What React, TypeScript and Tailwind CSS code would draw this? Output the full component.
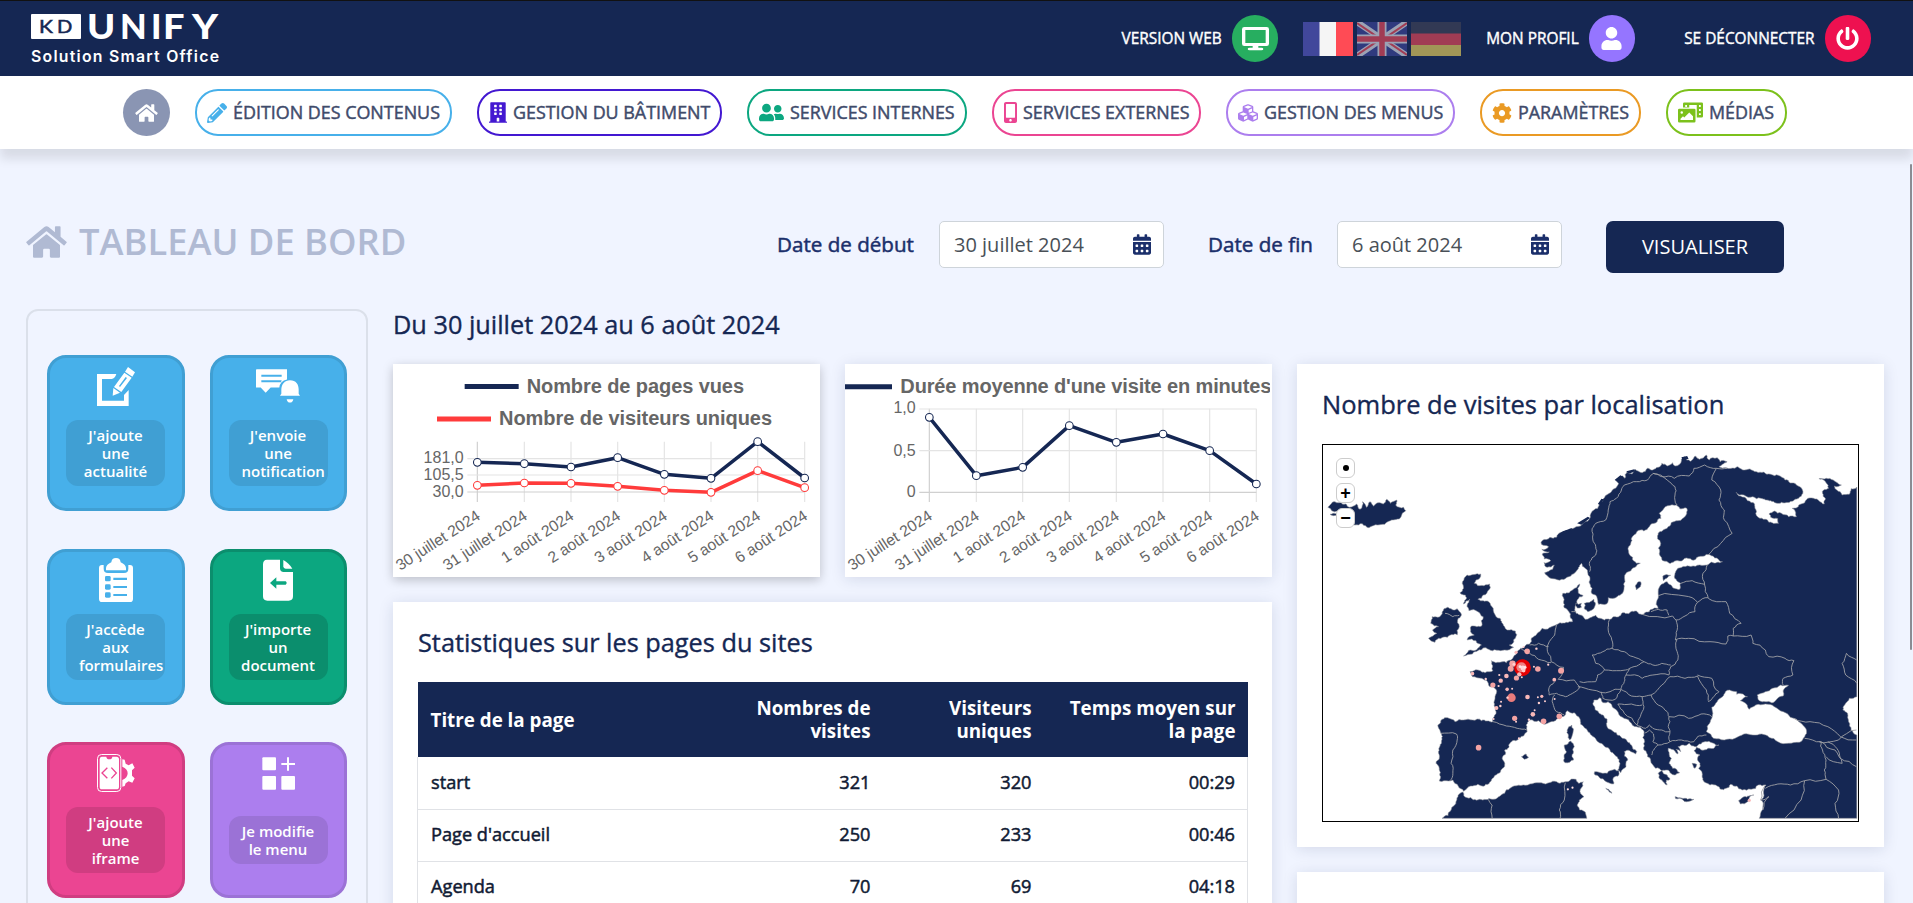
import React from "react";
import {
  FaBuilding,
  FaCalendarAlt,
  FaCog,
  FaCubes,
  FaHome,
  FaMobileAlt,
  FaPencilAlt,
  FaPhotoVideo,
  FaPowerOff,
  FaUser,
  FaUserFriends,
} from "react-icons/fa";

type Pt = [number, number];

const parse = (s: string): Pt[] =>
  s.trim().split(/\s+/).map((p) => p.split(",").map(Number) as Pt);

const noise = (n: number) => {
  const v = Math.sin(n * 127.1 + 11.7) * 43758.5453;
  return (v - Math.floor(v)) * 2 - 1;
};

// Midpoint displacement that turns a coarse outline into an irregular coast.
function rough(pts: Pt[], closed: boolean, amp: number, levels: number): string {
  let cur = pts;
  for (let l = 0; l < levels; l++) {
    const next: Pt[] = [];
    const count = closed ? cur.length : cur.length - 1;
    for (let i = 0; i < count; i++) {
      const a = cur[i];
      const b = cur[(i + 1) % cur.length];
      next.push(a);
      const dx = b[0] - a[0];
      const dy = b[1] - a[1];
      const len = Math.hypot(dx, dy);
      if (len > 7 && len < 150) {
        const k = amp * noise(a[0] * 3.1 + a[1] * 7.7 + l);
        next.push([(a[0] + b[0]) / 2 - dy * k, (a[1] + b[1]) / 2 + dx * k]);
      }
    }
    if (!closed) next.push(cur[cur.length - 1]);
    cur = next;
  }
  return "M" + cur.map((p) => p[0].toFixed(1) + "," + p[1].toFixed(1)).join("L") + (closed ? "Z" : "");
}

const MAINLAND = `760,400 752,412 742,428 725,440 705,448 680,446 663,436 657,428 668,424 684,405 664,412 655,398 674,392 656,387 650,372 670,366 649,358 668,350 648,343 650,332 672,322 690,322 700,308 722,302 745,290 765,280 785,262 795,240 810,225 820,208 838,190 855,175 864,160 855,150 875,138 882,145 888,125 902,132 910,118 930,128 945,115 960,120 975,112 985,100 1000,108 1015,98 1022,108 1040,92 1048,80 1065,94 1078,78 1090,88 1110,75 1118,90 1140,83 1148,95 1168,95 1155,103 1145,110 1165,113 1190,115 1198,110 1212,120 1250,125 1290,133 1330,150 1362,165 1378,178 1380,190 1368,205 1350,214 1320,217 1290,212 1262,205 1240,200 1215,195 1193,187 1205,198 1225,212 1245,222 1248,238 1255,262 1275,268 1285,277 1312,280 1310,266 1290,262 1285,252 1300,243 1320,250 1340,260 1362,260 1360,248 1350,235 1375,222 1410,205 1425,212 1440,222 1443,205 1435,190 1438,180 1452,175 1445,158 1425,146 1465,150 1488,165 1468,168 1475,180 1490,195 1510,193 1515,176 1531,171 1531,800 1510,805 1497,825 1492,840 1505,850 1508,875 1515,900 1531,915 1531,1165 1258,1165 1268,1130 1262,1110 1270,1090 1277,1065 1255,1065 1235,1078 1210,1080 1195,1068 1178,1063 1165,1075 1150,1078 1140,1068 1120,1065 1108,1058 1100,1045 1098,1030 1088,1015 1092,1000 1085,990 1092,975 1075,962 1082,952 1120,955 1145,945 1130,940 1112,935 1095,942 1078,950 1062,940 1045,945 1030,950 1038,965 1025,958 1030,972 1012,958 1003,955 1003,962 1012,985 1005,1000 1015,1015 1035,1028 1020,1035 1010,1030 1000,1020 985,1022 1000,1035 1008,1048 998,1050 1000,1065 985,1050 975,1030 985,1022 968,1015 955,998 945,980 935,960 937,935 935,910 915,890 895,875 875,862 860,842 845,825 835,815 822,818 812,803 795,810 792,820 798,838 820,855 830,880 850,905 875,925 900,945 915,965 912,972 895,962 880,965 890,990 885,1010 870,1028 862,1020 868,1000 860,980 840,960 815,940 790,918 770,895 755,865 740,848 720,842 705,860 690,868 665,880 640,872 615,870 605,885 608,905 585,925 560,940 545,960 538,985 545,1005 528,1030 508,1050 500,1062 470,1063 450,1068 430,1084 415,1068 400,1050 375,1052 362,1053 362,1020 353,1000 360,970 368,935 365,905 358,885 370,868 385,863 430,870 480,872 512,875 520,835 518,800 522,780 500,765 497,755 480,745 455,740 448,725 470,720 495,725 512,722 508,692 525,697 550,698 570,680 578,665 590,655 615,642 635,612 650,595 688,585 700,578 735,575 725,545 710,515 708,490 735,480 755,462 752,490 765,497 748,510 742,530 745,550 770,568 800,555 825,570 850,560 880,548 910,543 935,552 950,545 975,535 972,510 975,485 985,462 1000,455 1020,475 1035,478 1038,460 1025,448 1022,430 1030,415 1060,408 1110,405 1140,397 1155,395 1128,378 1120,374 1080,388 1040,393 1010,400 985,388 978,370 982,340 975,310 1000,295 1030,272 1055,250 1055,235 1020,226 995,230 978,250 983,265 950,290 915,305 900,325 892,350 895,375 925,400 910,412 885,430 882,455 875,490 860,500 835,503 830,522 808,523 803,500 785,465 778,430`;

const ISLANDS = [
  "440,435 478,432 475,445 460,460 503,462 500,480 485,495 470,508 500,515 513,535 515,548 532,565 545,590 552,600 575,603 575,625 558,645 570,652 545,660 500,658 470,662 455,672 430,678 450,660 480,645 465,632 440,630 460,615 450,600 452,588 482,585 485,560 470,545 445,542 440,525 447,508 430,522 435,495 420,488 430,475 427,455",
  "370,546 385,532 412,536 424,553 415,565 418,590 412,615 385,622 350,637 332,625 355,610 343,600 360,590 338,580 342,560 358,562",
  "50,232 70,215 100,222 110,232 122,228 130,222 140,238 147,215 158,232 168,215 178,228 195,218 205,222 215,208 225,220 243,210 240,225 262,232 268,242 255,260 225,272 190,285 165,293 125,285 90,262 56,253 95,248 105,240",
  "712,945 730,933 740,950 738,990 715,998 718,965",
  "733,885 736,910 727,930 720,900",
  "797,1025 820,1030 865,1022 848,1048 850,1062 825,1052 798,1035",
  "828,1075 836,1078 845,1090 838,1086",
  "1022,1100 1040,1104 1075,1108 1065,1113 1024,1106",
  "1200,1112 1215,1100 1243,1095 1225,1115 1205,1122",
  "592,980 605,972 612,982 600,988",
  "912,465 925,455 925,470 914,480",
  "988,438 1010,436 1000,444 990,452",
  "768,520 795,508 797,530 778,545 768,535",
  "744,520 760,520 760,532 748,534",
  "1070,1000 1083,1003 1078,1015",
  "370,1165 395,1140 410,1112 428,1086 440,1103 475,1108 510,1108 545,1090 560,1075 610,1065 660,1062 700,1060 720,1055 745,1048 752,1060 765,1055 757,1078 767,1100 748,1125 755,1140 772,1152 775,1165",
];

const SEAS = [
  "1110,905 1112,890 1122,870 1128,850 1125,832 1140,815 1155,800 1163,785 1175,780 1195,785 1195,793 1212,792 1225,800 1205,812 1222,822 1230,838 1248,825 1275,822 1300,830 1325,845 1345,862 1375,880 1390,900 1385,920 1370,937 1340,940 1310,935 1285,922 1265,912 1240,915 1215,912 1190,925 1160,930 1130,925",
  "1252,795 1275,785 1295,775 1318,765 1340,766 1325,782 1325,798 1305,810 1292,818 1275,815 1258,812",
];

const BORDERS = [
  "783,425 785,415 783,395 800,375 800,350 792,330 790,295 800,280 828,270 835,240 840,215 858,205 872,180 880,165 915,155 945,150 960,132",
  "960,130 985,140 1020,145 1062,138 1075,115 1105,105 1138,115 1168,115",
  "960,130 1000,150 1022,170 1022,195 1028,225",
  "1138,115 1125,150 1150,180 1145,210 1160,240 1160,270 1182,310 1150,340 1115,375",
  "1112,405 1100,430 1105,465 1115,503 1085,517 1050,498 975,497",
  "1038,460 1070,452 1105,463",
  "1085,517 1078,545 1050,558 1025,570 1015,558 930,553",
  "955,545 975,538 1000,540 1005,556",
  "1115,505 1165,515 1175,550 1207,580 1185,595 1185,618 1235,615 1240,640 1275,660 1285,680 1330,685 1355,692 1352,735 1325,745 1325,765",
  "1025,570 1028,600 1023,630 1060,625 1120,635 1165,642 1170,618 1185,618",
  "1027,630 1028,665 1030,690 1010,710 1005,735",
  "838,570 835,600 845,630 845,655 820,665 790,675 800,700 825,720 870,722 895,715 920,705 935,695 905,680 880,665 845,655",
  "935,695 960,705 985,700 1010,705",
  "895,715 885,735 930,745 960,735 1005,735",
  "755,755 800,755 805,735 825,720",
  "750,770 790,780 840,785 870,778 880,755 885,735",
  "870,778 900,798 930,800 955,795 985,765 1008,740 1050,745 1085,738 1110,780 1115,812",
  "1085,735 1125,745 1145,785 1130,800 1115,815",
  "955,795 975,825 1000,845 1005,860 1060,865 1095,852 1125,860",
  "1005,860 1003,890 1008,905 1008,935 1040,930 1075,935 1085,920 1110,915",
  "930,800 935,830 925,860 915,885 940,895 950,885 960,895 985,900 1008,905",
  "862,822 900,822 930,825",
  "862,822 880,850 915,885",
  "815,785 820,805 855,808 870,780",
  "937,910 950,900 962,912 960,935 975,945 1008,935",
  "957,975 965,955 975,945",
  "690,585 685,615 670,635 665,665 675,695 710,712 695,748",
  "615,645 640,640 668,650",
  "590,655 615,670 640,688 675,698",
  "695,748 740,750 755,770 735,790 715,800 690,790 670,795 668,780 685,755",
  "685,795 680,820 690,845 712,855",
  "512,875 550,888 580,895 607,900",
  "366,910 410,912 412,930 400,960 395,1000 400,1030 392,1052",
  "500,1108 510,1125 510,1165",
  "715,1058 712,1110 698,1140 700,1165",
  "1385,925 1430,935 1435,960 1445,990 1440,1020 1445,1048 1385,1052 1345,1065 1310,1062 1275,1075",
  "1355,865 1400,875 1450,890 1485,920 1530,930",
  "1425,935 1480,930 1530,900",
  "1430,935 1470,960 1490,1000 1445,980",
  "1450,935 1475,955 1485,985 1530,1010",
  "1445,1048 1480,1080 1470,1120 1480,1165",
  "1385,1052 1375,1110 1330,1165",
  "1531,760 1500,735 1490,700 1502,670 1531,690",
  "378,550 400,560 418,556",
  "732,545 745,545",
  "1275,1065 1262,1110 1285,1100 1268,1140",
];

const PINS: [number, number, number, string][] = [
  [595, 713, 8.4, "#e60000"], [592, 712, 5, "#f08080"], [596, 714, 2.4, "#ffd9d9"], [588, 710, 1.4, "#ffe6e6"], [602, 712, 1.4, "#ffe6e6"], [598, 722, 1.8, "#ffc9c9"],
  [567, 701, 3.2, "#f4a3a3"], [562, 716, 3, "#f4a3a3"], [571, 703, 1.4, "#ffd0d0"], [578, 744, 2.6, "#f4a3a3"], [586, 733, 2.2, "#f9b9b9"], [593, 742, 1, "#ffd0d0"],
  [608, 664, 2.8, "#f4a3a3"], [577, 667, 1.6, "#f9b9b9"], [634, 656, 1.2, "#ffd0d0"], [598, 651, 1, "#ffd0d0"], [638, 717, 2.8, "#f4a3a3"], [627, 710, 1, "#ffd0d0"],
  [667, 704, 1.1, "#ffd0d0"], [703, 722, 3, "#f4a3a3"], [684, 749, 1.9, "#f9b9b9"], [455, 731, 1.8, "#f9b9b9"], [492, 747, 1.2, "#ffd0d0"], [512, 765, 2.6, "#f4a3a3"],
  [530, 735, 1.1, "#ffd0d0"], [550, 738, 2.3, "#f9b9b9"], [534, 752, 2.2, "#f9b9b9"], [528, 768, 1.1, "#ffd0d0"], [552, 778, 1.8, "#f9b9b9"], [566, 776, 1, "#ffd0d0"],
  [564, 803, 4.3, "#ea7c7c"], [553, 803, 1.2, "#ffd0d0"], [609, 801, 2.3, "#f9b9b9"], [638, 802, 1, "#ffd0d0"], [649, 799, 1.6, "#f9b9b9"], [641, 819, 1.2, "#ffd0d0"], [658, 814, 1, "#ffd0d0"], [685, 807, 1, "#ffd0d0"],
  [522, 834, 2, "#f9b9b9"], [533, 828, 1.2, "#ffd0d0"], [535, 815, 1, "#ffd0d0"], [514, 867, 1.1, "#ffd0d0"], [573, 865, 2.6, "#f4a3a3"], [577, 875, 1, "#ffd0d0"], [624, 853, 2.3, "#f9b9b9"], [629, 841, 1, "#ffd0d0"],
  [613, 869, 1.2, "#ffd0d0"], [654, 874, 2.8, "#f4a3a3"], [698, 859, 2.8, "#f4a3a3"], [585, 925, 1.1, "#ffd0d0"], [472, 953, 2.8, "#f4a3a3"], [722, 1078, 1.1, "#ffe0e0"], [735, 1073, 1.1, "#ffe0e0"], [1230, 1111, 1.6, "#f9b9b9"],
];

function EuropeMap() {
  return (
    <svg className="block h-full w-full" viewBox="36.4 45 1498 1128" preserveAspectRatio="none">
      <g fill="#152753" stroke="#8d9099" strokeWidth="1.6">
        <path d={rough(parse(MAINLAND), true, 0.2, 3)} />
        {ISLANDS.map((s) => <path key={s} d={rough(parse(s), true, 0.2, 3)} />)}
        {SEAS.map((s) => <path key={s} d={rough(parse(s), true, 0.14, 2)} fill="#fff" />)}
      </g>
      <g fill="#152753">
        <path d="M690 318l18-14 26-10-4 8-22 12zM748 280l30-20 6 4-24 20zM853 150l16-14 8 4-12 14zM886 124l22-6 2 6-18 8zM1040 82l16-4 4 8-16 6zM806 222l10-16 6 2-8 18z" />
      </g>
      <g fill="none" stroke="#a0a1a5" strokeWidth="2.6" strokeLinejoin="round">
        {BORDERS.map((s) => <path key={s} d={rough(parse(s), false, 0.13, 2)} />)}
      </g>
      {PINS.map(([x, y, r, c]) => <ellipse key={x + "-" + y} cx={x} cy={y} rx={r * 2.8} ry={r * 3} fill={c} />)}
    </svg>
  );
}

const DAYS = ["30 juillet 2024", "31 juillet 2024", "1 août 2024", "2 août 2024", "3 août 2024", "4 août 2024", "5 août 2024", "6 août 2024"];

function Series({ pts, color }: { pts: Pt[]; color: string }) {
  return (
    <g stroke={color}>
      <polyline points={pts.map((p) => p.join(",")).join(" ")} fill="none" strokeWidth="10.5" strokeLinejoin="round" />
      {pts.map((p) => <circle key={p[0]} cx={p[0]} cy={p[1]} r="11.5" fill="#fff" strokeWidth="3.2" />)}
    </g>
  );
}

function DayLabels({ xs, y }: { xs: number[]; y: number }) {
  return (
    <g fontSize="47" fill="#666" textAnchor="end">
      {xs.map((x, i) => (
        <text key={x} transform={`translate(${x + 3} ${y}) rotate(-33)`} dy="16">{DAYS[i]}</text>
      ))}
    </g>
  );
}

const X1 = [292, 433, 573, 713, 853, 993, 1133, 1274];
const X2 = [298, 439, 578, 718, 859, 999, 1139, 1279];
const zip = (xs: number[], ys: number[]): Pt[] => xs.map((x, i) => [x, ys[i]] as Pt);

function VisitsChart() {
  return (
    <svg className="block h-[213px] w-[427px] overflow-visible font-['Liberation_Sans',sans-serif]" viewBox="39 222 1281 639">
      <g stroke="#e4e4e4" strokeWidth="3.5">
        {X1.map((x, i) => <path key={x} d={`M${x} 455V636`} stroke={i === 0 ? "#cfcfcf" : "#e4e4e4"} />)}
        <path d="M262 506H1274M262 555H1274" />
        <path d="M262 606H1274" stroke="#d0d0d0" />
      </g>
      <path d="M254 289.500H416" stroke="#152753" strokeWidth="15" />
      <path d="M171 387H333" stroke="#ff3b3b" strokeWidth="15" />
      <g fontSize="60" fontWeight="700" fill="#666">
        <text x="440" y="308" textLength="652">Nombre de pages vues</text>
        <text x="357" y="405" textLength="819">Nombre de visiteurs uniques</text>
      </g>
      <g fontSize="48" fill="#666" textAnchor="end">
        <text x="251" y="518">181,0</text>
        <text x="251" y="569">105,5</text>
        <text x="251" y="620">30,0</text>
      </g>
      <Series color="#ff3b3b" pts={zip(X1, [586, 579, 580, 589, 601, 607, 542, 593])} />
      <Series color="#152753" pts={zip(X1, [517, 521, 531, 503, 553, 565, 455, 564])} />
      <DayLabels xs={X1} y={672} />
    </svg>
  );
}

function DurationChart() {
  return (
    <svg className="block h-[213px] w-[425px] font-['Liberation_Sans',sans-serif]" viewBox="45 42 1275 639">
      <g stroke="#e4e4e4" strokeWidth="3.5">
        {X2.map((x, i) => <path key={x} d={`M${x} 176V456`} stroke={i === 0 ? "#cfcfcf" : "#e4e4e4"} />)}
        <path d="M268 177H1279M268 302H1279" />
        <path d="M268 427H1279" stroke="#d0d0d0" />
      </g>
      <path d="M24 110H186" stroke="#152753" strokeWidth="15" />
      <text x="211" y="128" fontSize="60" fontWeight="700" fill="#666" textLength="1113">Durée moyenne d'une visite en minutes</text>
      <g fontSize="48" fill="#666" textAnchor="end">
        <text x="257" y="190">1,0</text>
        <text x="257" y="317">0,5</text>
        <text x="257" y="440">0</text>
      </g>
      <Series color="#152753" pts={zip(X2, [202, 377, 352, 227, 277, 252, 302, 402])} />
      <DayLabels xs={X2} y={492} />
    </svg>
  );
}

function Logo() {
  return (
    <svg className="block h-[58px] w-[200px] overflow-visible" viewBox="0 0 200 58">
      <rect x="5" y="4" width="50" height="25" rx="1" fill="#fff" />
      <g fontFamily="Lato, sans-serif" fill="#152753" stroke="#152753" strokeWidth="0.500" fontSize="17.500" fontWeight="400">
        <text transform="translate(13 22.800) scale(1.200 1)">K</text>
        <text transform="translate(31 22.800) scale(1.150 1)">D</text>
      </g>
      <g fontFamily="Lato, sans-serif" fill="#fff" fontSize="34.500" fontWeight="900">
        <text transform="translate(61 28.700) scale(1.100 1)">U</text>
        <text transform="translate(94 28.700)">N</text>
        <text transform="translate(125 28.700)">I</text>
        <text transform="translate(137 28.700) scale(1.100 1)">F</text>
        <text transform="translate(166 28.700) scale(1.150 1)">Y</text>
      </g>
      <text x="5" y="52" fontFamily="Inter, sans-serif" fontSize="15.800" fontWeight="600" fill="#fff" textLength="188">Solution Smart Office</text>
    </svg>
  );
}

function ScreenIcon() {
  return (
    <svg className="h-[24px] w-[27px]" viewBox="0 0 81 72" fill="#fff">
      <path fillRule="evenodd" d="M7 0H74Q81 0 81 7V50Q81 57 74 57H49V62H58Q64 62 64 66T58 70H23Q17 70 17 66T23 62H32V57H7Q0 57 0 50V7Q0 0 7 0ZM10 9V48H71V9Z" />
    </svg>
  );
}

function FlagFr() {
  return (
    <svg className="h-[34px] w-[50px]" viewBox="0 0 50 34">
      <path fill="#41479b" d="M0 0h17v34H0z" />
      <path fill="#f5f5f5" d="M16.500 0H33v34H16.500z" />
      <path fill="#ff4b55" d="M33 0h17v34H33z" />
    </svg>
  );
}

function FlagUk() {
  return (
    <svg className="h-[34px] w-[50px] opacity-60" viewBox="0 0 50 34">
      <path fill="#41479b" d="M0 0h50v34H0z" />
      <path d="M0 0l50 34M50 0L0 34" stroke="#f5f5f5" strokeWidth="6" />
      <path d="M0 1l20 13.600M50 33L30 19.400M50 1L30 14.600M0 33l20-13.600" stroke="#ff4b55" strokeWidth="2" />
      <path d="M25 0v34M0 17h50" stroke="#f5f5f5" strokeWidth="9" />
      <path d="M25 0v34M0 17h50" stroke="#ff4b55" strokeWidth="5.500" />
    </svg>
  );
}

function FlagDe() {
  return (
    <svg className="h-[34px] w-[50px] opacity-60" viewBox="0 0 50 34">
      <path fill="#464655" d="M0 0h50v12H0z" />
      <path fill="#ff4b55" d="M0 11.500h50v12H0z" />
      <path fill="#ffe15a" d="M0 23h50v11H0z" />
    </svg>
  );
}

function HeaderAction({ label, icon, tone }: { label: string; icon: React.ReactNode; tone: string }) {
  return (
    <div className="flex items-center gap-[10px] text-[15.400px] whitespace-nowrap text-white">
      <span className="[-webkit-text-stroke:0.4px]">{label}</span>
      <span className={`flex size-[46.5px] items-center justify-center rounded-full ${tone}`}>{icon}</span>
    </div>
  );
}

function NavPill({ label, icon, tone }: { label: string; icon: React.ReactNode; tone: string }) {
  return (
    <div className={`flex h-[47px] items-center gap-[6px] rounded-[23px] border-2 pl-[10px] whitespace-nowrap ${tone}`}>
      {icon}
      <span className="text-[#3f4b6b] [-webkit-text-stroke:0.45px]">{label}</span>
    </div>
  );
}

function Tile({ lines, icon, tone, labelTone, short }: { lines: string[]; icon: React.ReactNode; tone: string; labelTone: string; short?: boolean }) {
  return (
    <div className={`flex h-[156px] w-[137.5px] flex-col items-start rounded-[19px] border-[3px] px-4 ${tone}`}>
      <div className={`w-full shrink-0 ${short ? "h-[71px]" : "h-[62px]"}`}>{icon}</div>
      <div className={`w-[99px] rounded-[12px] px-[13px] pt-[6px] pb-[6px] ${labelTone}`}>
        {lines.map((l) => (
          <div key={l} className="flex justify-center">
            <span className={`text-[15px] leading-[18px] font-semibold whitespace-nowrap text-white ${l.length > 10 ? "w-full" : ""}`}>{l}</span>
          </div>
        ))}
      </div>
    </div>
  );
}

function EditIcon() {
  return (
    <svg className="ml-[31px] mt-[9px] h-[39px] w-[38px]" viewBox="0 0 114 117" fill="#fff">
      <path d="M0 21H58Q54 34 44 36H15V101H81V84L95 69V117H0Z" />
      <path d="M93 0L114 16 106 29 84 14Z" />
      <path fillRule="evenodd" d="M82 17L104 32 73 75 51 60ZM86 30L66 57 69 60 90 33Z" />
      <path d="M49 63L69 77 47 86Z" />
    </svg>
  );
}

function NotifyIcon() {
  return (
    <svg className="ml-[27px] mt-[11px] h-[34px] w-[44px]" viewBox="0 0 132 101" fill="#fff">
      <path fillRule="evenodd" d="M2 0H93V31Q72 36 70 55H44L29 71 14 55H0V2ZM16 17V23H77V17ZM16 33V39H75L77 33Z" />
      <path d="M102 33C120 33 128 45 128 61V74L132 80H72L76 74V61C76 45 86 33 102 33Z" />
      <path d="M92 90H112Q110 100 102 100T92 90Z" />
    </svg>
  );
}

function FormIcon() {
  return (
    <svg className="ml-[33px] mt-[6px] h-[44px] w-[34px]" viewBox="0 0 102 132" fill="#fff">
      <path fillRule="evenodd" d="M9 21H14V32Q14 45 27 45H75Q88 45 88 32V21H93Q102 21 102 30V122Q102 132 93 132H9Q0 132 0 122V30Q0 21 9 21Z" />
      <path d="M21 37V30Q22 20 37 13Q38 0 51 0T65 13Q80 20 81 30V37Z" />
      <g fill="#47b0ea">
        <rect x="18" y="54" width="17" height="16" rx="4" />
        <rect x="18" y="79" width="17" height="16" rx="4" />
        <rect x="18" y="103" width="17" height="16" rx="4" />
        <path d="M43 59H84V66H43ZM43 84H84V90H43ZM43 108H84V114H43Z" />
      </g>
    </svg>
  );
}

function ImportIcon() {
  return (
    <svg className="ml-[34px] mt-[7px] h-[42px] w-[30px]" viewBox="0 0 90 126" fill="#fff">
      <path d="M12 2H51V28Q51 39 62 39H90V112Q90 125 77 125H13Q0 125 0 112V16Q0 2 12 2Z" />
      <path d="M61 3Q78 12 88 29H68Q61 29 61 22Z" />
      <path d="M21 72L40 55V67H68Q74 72 68 77H40V89Z" fill="#0ca780" />
    </svg>
  );
}

function IframeIcon() {
  return (
    <svg className="ml-[31px] mt-[9px] h-[38px] w-[38px]" viewBox="0 0 114 114" fill="#fff">
      <rect x="1.500" y="1.500" width="70" height="111" rx="12" fill="none" stroke="#fff" strokeWidth="3" />
      <path d="M14 8H28Q29 16 37 16T46 8H58Q66 8 66 16V98Q66 106 58 106H15Q8 106 8 98V16Q8 8 14 8Z" />
      <path d="M31 41L15 57 31 73M43 41L58 57 43 73" fill="none" stroke="#eb4592" strokeWidth="4" />
      <path d="M76 16L83 17 86 29 95 34 106 28 113 41 105 49V65L113 73 106 86 95 82 86 88 83 96 76 98V78Q92 72 92 58T76 38Z" />
    </svg>
  );
}

function MenuIcon() {
  return (
    <svg className="ml-[33px] mt-[12px] h-[33px] w-[33px]" viewBox="0 0 99 99" fill="#fff">
      <rect x="1" y="1" width="41" height="39" rx="3" />
      <rect x="1" y="57" width="41" height="41" rx="3" />
      <rect x="58" y="57" width="41" height="41" rx="3" />
      <path d="M75 1H81V18H99V24H81V41H75V24H58V18H75Z" />
    </svg>
  );
}

function DateField({ value }: { value: string }) {
  return (
    <div className="flex h-[47px] w-[225px] items-center justify-between rounded-[5px] border border-[#ced4da] bg-white pr-3 pl-[14px] text-[20px] text-[#495057]">
      <span>{value}</span>
      <FaCalendarAlt className="h-[21px] w-[18px] text-[#1b2f6b]" />
    </div>
  );
}

const ROWS = [
  ["start", "321", "320", "00:29"],
  ["Page d'accueil", "250", "233", "00:46"],
  ["Agenda", "70", "69", "04:18"],
];

export default function App() {
  return (
    <div className="relative flex h-[903px] w-[1913px] flex-col overflow-hidden bg-[#f0f4ff] font-['Open_Sans',sans-serif] text-[#152753]">
      <header className="flex h-[76px] shrink-0 items-center justify-between border-t border-[#111] bg-[#152753] pr-[42px] pl-[26px]">
        <Logo />
        <div className="flex items-center">
          <HeaderAction label="VERSION WEB" tone="bg-[#27ae60]" icon={<ScreenIcon />} />
          <div className="mr-[25px] ml-[25px] flex gap-1">
            <FlagFr />
            <FlagUk />
            <FlagDe />
          </div>
          <HeaderAction label="MON PROFIL" tone="bg-[#9575ff]" icon={<FaUser className="h-[23px] w-[21px] text-white" />} />
          <div className="w-[49px]" />
          <HeaderAction label="SE DÉCONNECTER" tone="bg-[#ee1150]" icon={<FaPowerOff className="size-[23px] text-white" />} />
        </div>
      </header>

      <nav className="z-10 flex h-[73px] shrink-0 items-center gap-[25px] bg-white pl-[123px] text-[17.900px] shadow-[0_10px_10px_rgba(0,0,0,0.1)]">
        <div className="flex size-[47px] items-center justify-center rounded-full bg-[#8a95b3]">
          <FaHome className="h-[20px] w-[23px] text-white" />
        </div>
        <NavPill label="ÉDITION DES CONTENUS" tone="w-[257px] border-[#47b0ea] text-[#47b0ea]" icon={<FaPencilAlt className="size-[20px]" />} />
        <NavPill label="GESTION DU BÂTIMENT" tone="w-[245px] border-[#4318d1] text-[#4318d1]" icon={<FaBuilding className="h-[21px] w-[18px]" />} />
        <NavPill label="SERVICES INTERNES" tone="w-[220px] border-[#0ca780] text-[#0ca780]" icon={<FaUserFriends className="size-[25px]" />} />
        <NavPill label="SERVICES EXTERNES" tone="w-[209px] border-[#eb4592] text-[#eb4592]" icon={<FaMobileAlt className="h-[21px] w-[13px]" />} />
        <NavPill label="GESTION DES MENUS" tone="w-[229px] border-[#ac7eee] text-[#ac7eee]" icon={<FaCubes className="size-[20px]" />} />
        <NavPill label="PARAMÈTRES" tone="w-[161px] border-[#ea9a24] text-[#ea9a24]" icon={<FaCog className="size-[20px]" />} />
        <NavPill label="MÉDIAS" tone="w-[121px] border-[#7cc11c] text-[#7cc11c]" icon={<FaPhotoVideo className="h-[21px] w-[25px]" />} />
      </nav>

      <div className="flex h-[160px] shrink-0 items-start pt-[72px] pl-[26px]">
        <div className="flex w-[751px] items-center gap-[12px] text-[#b0bad3]">
          <FaHome className="h-[36px] w-[41px]" />
          <h1 className="-mt-[2px] text-[36.300px] leading-[44px] font-semibold">TABLEAU DE BORD</h1>
        </div>
        <div className="flex items-center text-[20.600px] text-[#1b2f6b]">
          <span className="w-[162px] whitespace-nowrap [-webkit-text-stroke:0.5px]">Date de début</span>
          <DateField value="30 juillet 2024" />
          <span className="ml-[44px] w-[129px] whitespace-nowrap [-webkit-text-stroke:0.5px]">Date de fin</span>
          <DateField value="6 août 2024" />
        </div>
        <div className="ml-[44px] flex h-[52px] w-[178px] items-center justify-center rounded-[7px] bg-[#152753] text-[20px] text-white">VISUALISER</div>
      </div>

      <main className="flex items-start pl-[26px]">
        <aside className="grid h-[700px] w-[342px] shrink-0 grid-cols-[137.5px_137.5px] content-start gap-x-[25px] gap-y-[37.500px] rounded-[12px] border-2 border-[#dbe0ea] pt-[44px] pl-[19px]">
          <Tile lines={["J'ajoute", "une", "actualité"]} tone="bg-[#47b0ea] border-[#409fd3]" labelTone="bg-[#409fd3]" icon={<EditIcon />} />
          <Tile lines={["J'envoie", "une", "notification"]} tone="bg-[#47b0ea] border-[#409fd3]" labelTone="bg-[#409fd3]" icon={<NotifyIcon />} />
          <Tile lines={["J'accède", "aux", "formulaires"]} tone="bg-[#47b0ea] border-[#409fd3]" labelTone="bg-[#409fd3]" icon={<FormIcon />} />
          <Tile lines={["J'importe", "un", "document"]} tone="bg-[#0ca780] border-[#0b8e6d]" labelTone="bg-[#0b8e6d]" icon={<ImportIcon />} />
          <Tile lines={["J'ajoute", "une", "iframe"]} tone="bg-[#eb4592] border-[#d03d81]" labelTone="bg-[#d03d81]" icon={<IframeIcon />} />
          <Tile short lines={["Je modifie", "le menu"]} tone="bg-[#ac7eee] border-[#9b72d6]" labelTone="bg-[#9b72d6]" icon={<MenuIcon />} />
        </aside>

        <section className="ml-[25px] w-[879px] shrink-0">
          <h2 className="h-[55px] text-[25.300px] leading-[30px] [-webkit-text-stroke:0.35px]">Du 30 juillet 2024 au 6 août 2024</h2>
          <div className="flex gap-[25px]">
            <div className="h-[213px] w-[427px] bg-white shadow-[0_3px_10px_rgba(0,0,0,0.22)]"><VisitsChart /></div>
            <div className="h-[213px] w-[427px] bg-white shadow-[0_2px_14px_rgba(21,39,83,0.13)]"><DurationChart /></div>
          </div>
          <div className="mt-[25px] h-[400px] bg-white px-[24px] pt-[25px] shadow-[0_2px_14px_rgba(21,39,83,0.13)]">
            <h3 className="h-[55px] pl-px text-[25.300px] leading-[31px] [-webkit-text-stroke:0.35px]">Statistiques sur les pages du sites</h3>
            <table className="w-[830px] table-fixed border-collapse text-[18.200px]">
              <colgroup>
                <col className="w-[310px]" />
                <col className="w-[155px]" />
                <col className="w-[161px]" />
                <col className="w-[204px]" />
              </colgroup>
              <thead>
                <tr className="h-[75px] bg-[#152753] text-right text-[18.800px] leading-[23px] font-bold text-white">
                  <th className="pt-[2px] pl-[13px] text-left">Titre de la page</th>
                  <th className="px-3">Nombres de<br />visites</th>
                  <th className="px-3">Visiteurs<br />uniques</th>
                  <th className="px-3">Temps moyen sur<br />la page</th>
                </tr>
              </thead>
              <tbody>
                {ROWS.map((r) => (
                  <tr key={r[0]} className="h-[52px] border border-t-0 border-[#e0e2e6] text-right text-[#101a33] [-webkit-text-stroke:0.5px]">
                    <td className="pl-[13px] text-left">{r[0]}</td>
                    <td className="px-3">{r[1]}</td>
                    <td className="px-3">{r[2]}</td>
                    <td className="px-3">{r[3]}</td>
                  </tr>
                ))}
              </tbody>
            </table>
          </div>
        </section>

        <section className="mt-[55px] ml-[25px] flex w-[587px] shrink-0 flex-col gap-[25px]">
          <div className="h-[483px] bg-white px-[25px] pt-[25px] shadow-[0_2px_14px_rgba(21,39,83,0.13)]">
            <h3 className="h-[55px] text-[25.500px] leading-[31px] [-webkit-text-stroke:0.35px]">Nombre de visites par localisation</h3>
            <div className="relative h-[378px] w-[537px] border border-black">
              <EuropeMap />
              <div className="absolute top-[13px] left-[13px] flex flex-col gap-[5px] font-['Liberation_Sans',sans-serif] text-[18px] font-bold text-black">
                <div className="flex h-[20px] w-[19px] items-center justify-center rounded-[6px] border border-[#ccc] bg-white"><span className="size-[6px] rounded-full bg-black" /></div>
                <div className="flex h-[20px] w-[19px] items-center justify-center rounded-[6px] border border-[#ccc] bg-white leading-none">+</div>
                <div className="flex h-[20px] w-[19px] items-center justify-center rounded-[6px] border border-[#ccc] bg-white leading-none">−</div>
              </div>
            </div>
          </div>
          <div className="h-[100px] bg-white shadow-[0_2px_14px_rgba(21,39,83,0.13)]" />
        </section>
      </main>

      <div className="absolute top-[164px] right-[1px] h-[486px] w-[2px] rounded-full bg-[#8a8d94]" />
    </div>
  );
}
